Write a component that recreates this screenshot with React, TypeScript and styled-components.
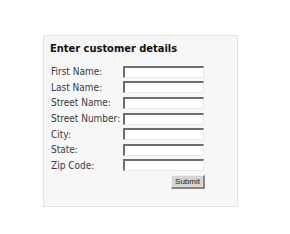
import { Fragment } from "react";
import styled, { createGlobalStyle } from "styled-components";

const GlobalStyle = createGlobalStyle`
    html, body {
        margin: 0;
        padding: 0;
        background: #ffffff;
    }
`;

const Page = styled.div`
    padding: 35px 0 0 43px;
`;

const Panel = styled.div`
    box-sizing: border-box;
    width: 195px;
    height: 172px;
    background: #f7f7f7;
    border: 1px solid #e4e4e4;
    padding: 6px 6px 0 6px;
    font-family: "DejaVu Sans Condensed", "DejaVu Sans", Verdana, sans-serif;
`;

const Title = styled.h2`
    margin: 0 0 9px 0;
    font-size: 11px;
    line-height: 13px;
    font-weight: bold;
    color: #111111;
`;

const FormGrid = styled.form`
    display: grid;
    grid-template-columns: 72px 81px;
    grid-auto-rows: 15.6px;
    align-items: center;
    padding-left: 1px;
`;

const Label = styled.label`
    font-size: 10px;
    color: #3a3a3a;
    white-space: nowrap;
`;

const Field = styled.input`
    box-sizing: border-box;
    width: 81px;
    height: 12px;
    margin: 0;
    padding: 0 2px;
    background: #ffffff;
    border-style: solid;
    border-width: 2px 1px 1px 2px;
    border-color: #6e6e6e #e8e8e8 #e8e8e8 #6e6e6e;
    outline: none;
`;

const Actions = styled.div`
    display: flex;
    justify-content: flex-end;
    width: 155px;
    margin-top: 1.5px;
`;

const SubmitButton = styled.button`
    box-sizing: border-box;
    width: 34px;
    height: 14px;
    padding: 0;
    background: #d8d4cf;
    border-style: solid;
    border-width: 1px 2px 2px 1px;
    border-color: #f2f0ec #8a8782 #8a8782 #f2f0ec;
    font-family: "Liberation Sans", Arial, sans-serif;
    font-size: 8px;
    color: #222222;
`;

const fields = [
    "First Name:",
    "Last Name:",
    "Street Name:",
    "Street Number:",
    "City:",
    "State:",
    "Zip Code:",
];

function App() {
    return (
        <Page>
            <GlobalStyle />
            <Panel>
                <Title>Enter customer details</Title>
                <FormGrid onSubmit={(e) => e.preventDefault()}>
                    {fields.map((f) => (
                        <Fragment key={f}>
                            <Label>{f}</Label>
                            <Field type="text" />
                        </Fragment>
                    ))}
                </FormGrid>
                <Actions>
                    <SubmitButton type="button">Submit</SubmitButton>
                </Actions>
            </Panel>
        </Page>
    );
}

export default App;
